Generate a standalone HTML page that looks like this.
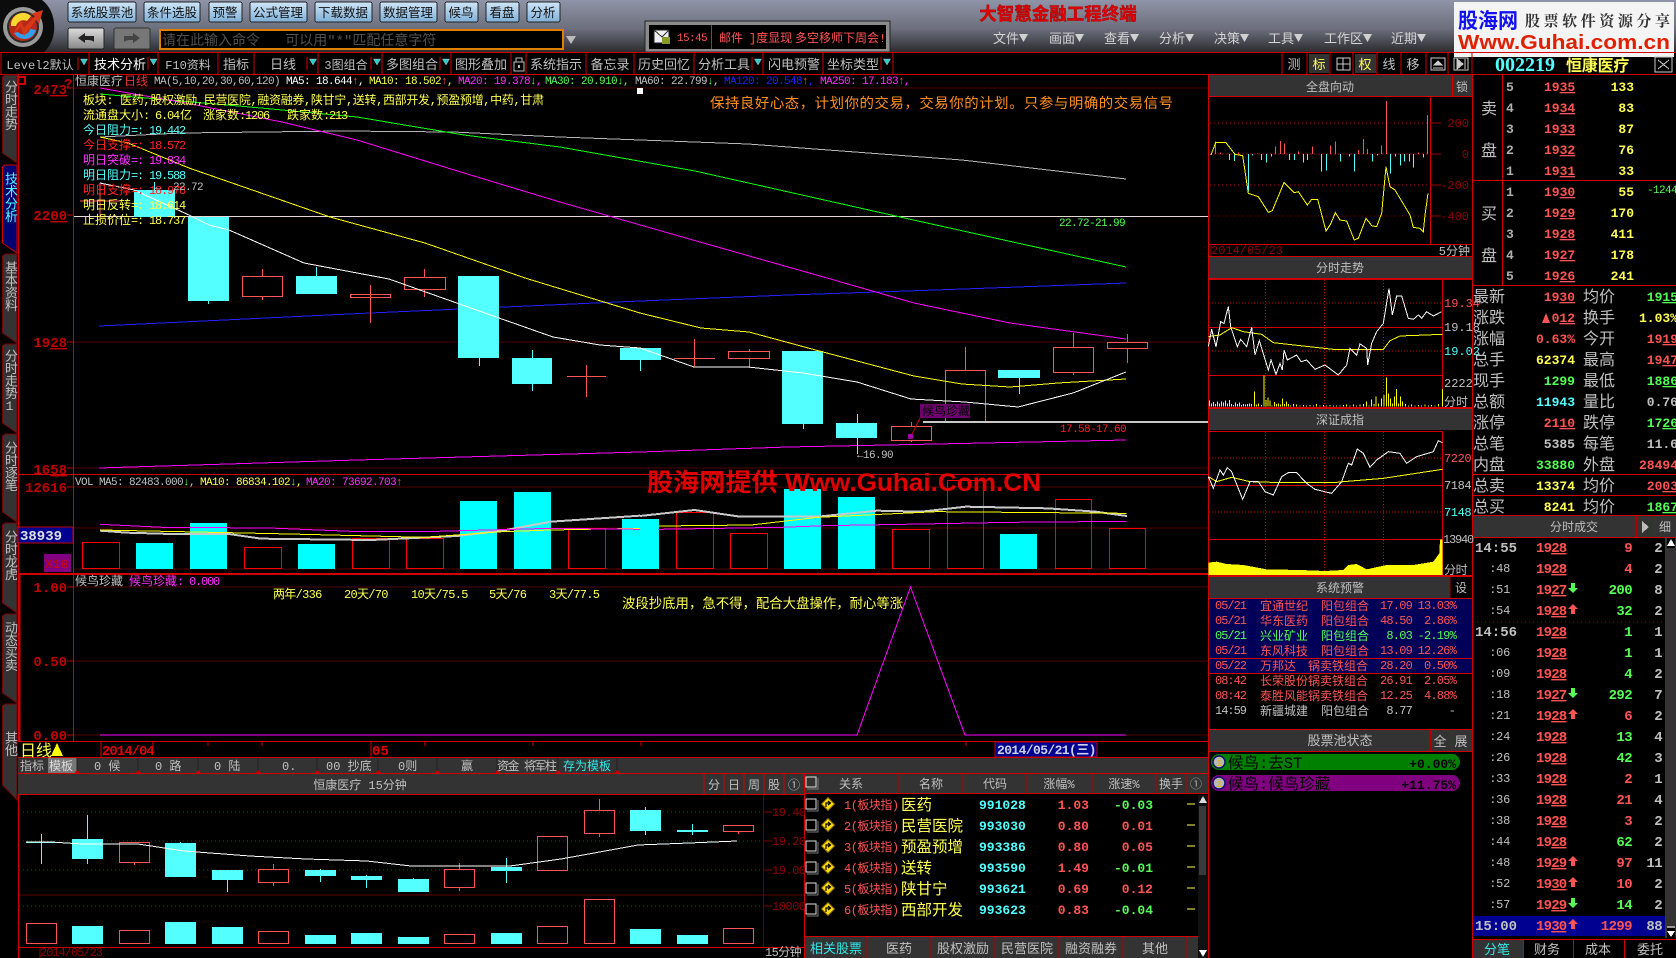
<!DOCTYPE html>
<html><head><meta charset="utf-8"><title>大智慧金融工程终端</title>
<style>
html,body{margin:0;padding:0;background:#000;width:1676px;height:958px;overflow:hidden}
svg{display:block}
text{font-family:"Liberation Mono","Noto Sans CJK SC",monospace;white-space:pre}
polyline{fill:none;vector-effect:non-scaling-stroke}
.s10{font-size:11px;letter-spacing:-.6px}
.s12{font-size:12px}
.s13{font-size:13px}
.s14{font-size:14px}
.s16{font-size:16px}
.b{font-weight:bold}
.n{font-size:13px;font-weight:bold}
.m{text-anchor:middle}
.e{text-anchor:end}
.W{fill:#c0c0c0}.W2{fill:#e8e8e8}.R{fill:#ff5454}.D{fill:#c00000}.Y{fill:#ffff54}.C{fill:#54ffff}.G{fill:#54ff54}.M{fill:#ff30ff}.B{fill:#3030ff}.K{fill:#000}.O{fill:#ff9020}
.u{text-decoration:underline}
.v{writing-mode:vertical-rl;text-orientation:upright;font-size:13px;letter-spacing:-.5px}
.hd{fill:#333}
.btn{fill:url(#bt);stroke:#222}
.nr{letter-spacing:-1.2px}
</style></head><body>
<svg xmlns="http://www.w3.org/2000/svg" width="1676" height="958" viewBox="0 0 1676 958" shape-rendering="crispEdges">
<defs>
<linearGradient id="top" x1="0" y1="0" x2="0" y2="1"><stop offset="0" stop-color="#8f94a8"/><stop offset=".55" stop-color="#6c6f7c"/><stop offset="1" stop-color="#2c2c30"/></linearGradient>
<linearGradient id="bt" x1="0" y1="0" x2="0" y2="1"><stop offset="0" stop-color="#cfe6f8"/><stop offset="1" stop-color="#7fb0d8"/></linearGradient>
<linearGradient id="gb" x1="0" y1="0" x2="0" y2="1"><stop offset="0" stop-color="#ddd"/><stop offset="1" stop-color="#888"/></linearGradient>
<path id="au" d="M0 -5L5 0H2V5H-2V0H-5Z" fill="#ff5454" shape-rendering="auto"/>
<path id="ad" d="M0 5L5 0H2V-5H-2V0H-5Z" fill="#54ff54" shape-rendering="auto"/>
<path id="tri" d="M-3.5 -3H3.5L0 3Z" fill="#30c8c8" stroke="#fff" stroke-width=".3" shape-rendering="auto"/>
<path id="mt" d="M0 0H9L4.500 8Z" fill="#d0d0d0" shape-rendering="auto"/>
<g id="cb"><rect x="0" y="0" width="10" height="10" fill="none" stroke="#e0e0e0"/><path d="M1 12H12V1" fill="none" stroke="#777"/></g>
<g id="dm" shape-rendering="auto"><path d="M0 -6.5L6.5 0L0 6.5L-6.5 0Z" fill="#ffe000" stroke="#886600"/><path d="M-2 3V-1H2M0 -3L2.5 -1L0 1" fill="none" stroke="#000" stroke-width="1.2"/></g>
</defs>
<rect width="1676" height="958" fill="#000"/>

<!-- top bar -->
<rect width="1676" height="52" fill="url(#top)"/>
<path d="M0 0H42C58 12 58 40 44 52H0Z" fill="#0c0c0c" shape-rendering="auto"/>
<g shape-rendering="auto">
<circle cx="23" cy="27" r="20" fill="#999"/><circle cx="23" cy="27" r="16" fill="#2a2a2a"/>
<circle cx="23" cy="27" r="14" fill="#b82818"/>
<path d="M11 26A12 12 0 0 1 31 16L27 21A8 8 0 0 0 16 26Z" fill="#f8d830"/>
<path d="M14 33A12 12 0 0 0 36 30L30 29A7 7 0 0 1 18 32Z" fill="#30a0e8"/>
<path d="M13 34L21 20L24 28L35 16L31 14L43 10L39 24L36 20L24 36L21 27Z" fill="#d83818"/>
</g>
<g text-anchor="middle" fill="#111" style="font-size:12.500px">
<rect class="btn" x="68" y="2" width="68" height="20" rx="2"/><text x="102" y="17">系统股票池</text>
<rect class="btn" x="144" y="2" width="56" height="20" rx="2"/><text x="172" y="17">条件选股</text>
<rect class="btn" x="209" y="2" width="33" height="20" rx="2"/><text x="225" y="17">预警</text>
<rect class="btn" x="250" y="2" width="57" height="20" rx="2"/><text x="278" y="17">公式管理</text>
<rect class="btn" x="315" y="2" width="57" height="20" rx="2"/><text x="343" y="17">下载数据</text>
<rect class="btn" x="380" y="2" width="57" height="20" rx="2"/><text x="408" y="17">数据管理</text>
<rect class="btn" x="445" y="2" width="33" height="20" rx="2"/><text x="461" y="17">候鸟</text>
<rect class="btn" x="486" y="2" width="33" height="20" rx="2"/><text x="502" y="17">看盘</text>
<rect class="btn" x="527" y="2" width="33" height="20" rx="2"/><text x="543" y="17">分析</text>
</g>
<rect x="68" y="28" width="36" height="21" rx="2" fill="url(#gb)" stroke="#222"/>
<path d="M78 38L85 33V36H94V42C92 40 89 40 85 40V43Z" fill="#222" shape-rendering="auto"/>
<rect x="114" y="28" width="36" height="21" rx="2" fill="#777" stroke="#333"/>
<path d="M140 38L133 33V36H124V42C126 40 129 40 133 40V43Z" fill="#444" shape-rendering="auto"/>
<rect x="160" y="30" width="403" height="19" fill="#000" stroke="#e08000" stroke-width="2"/>
<text x="162" y="45" class="s14" fill="#505050">请在此输入命令   可以用"*"匹配任意字符</text>
<path d="M566 36H576L571 44Z" fill="#bbb"/>
<rect x="645" y="21" width="245" height="31" fill="#8a8a8a" stroke="#222"/>
<rect x="649" y="25" width="237" height="24" fill="#000"/>
<rect x="654" y="30" width="15" height="13" fill="#eee" stroke="#222"/><path d="M654 30L662 37L669 30" fill="none" stroke="#333"/><rect x="662" y="37" width="8" height="7" fill="#8a9a30"/>
<text x="677" y="41" class="s10" fill="#ff5454">15:45</text>
<rect x="711" y="25" width="1" height="24" fill="#555"/>
<g class="s12" fill="#ff5454"><text x="719" y="42">邮件</text><text x="749" y="42">]度显现</text><text x="795" y="42">多空移师下周会!</text></g>
<text x="1058" y="20" class="s16 b m" fill="#e00000" stroke="#a00000" stroke-width=".4" style="font-size:17.5px">大智慧金融工程终端</text>
<g class="s13" fill="#d4d4d4">
<text x="993" y="43">文件</text><text x="1049" y="43">画面</text><text x="1104" y="43">查看</text><text x="1159" y="43">分析</text><text x="1214" y="43">决策</text><text x="1268" y="43">工具</text><text x="1324" y="43">工作区</text><text x="1391" y="43">近期</text>
</g>
<use href="#mt" x="1019" y="34"/><use href="#mt" x="1075" y="34"/><use href="#mt" x="1130" y="34"/><use href="#mt" x="1185" y="34"/><use href="#mt" x="1240" y="34"/><use href="#mt" x="1294" y="34"/><use href="#mt" x="1363" y="34"/><use href="#mt" x="1417" y="34"/>

<!-- guhai logo -->
<rect x="1454" y="2" width="220" height="55" fill="#f4f4f4"/>
<text x="1458" y="28" class="b" fill="#1010f0" textLength="60" lengthAdjust="spacingAndGlyphs" style="font-size:21px;font-family:'Liberation Sans','Noto Sans CJK SC',sans-serif">股海网</text>
<text x="1525" y="26" class="b" fill="#333" textLength="145" style="font-size:15px;font-family:'Noto Serif CJK SC',serif">股票软件资源分享</text>
<text x="1458" y="49" class="b" fill="#e02000" textLength="212" lengthAdjust="spacingAndGlyphs" style="font-size:20px;font-family:'Liberation Sans',sans-serif">Www.Guhai.com.cn</text>

<!-- toolbar -->
<rect x="0" y="52" width="1676" height="1" fill="#d00000"/><rect x="0" y="74" width="1676" height="1" fill="#d00000"/>
<path d="M1 53V74M89 53V74M158 53V74M218 53V74M254 53V74M318 53V74M382 53V74M451 53V74M511 53V74M526 53V74M586 53V74M634 53V74M694 53V74M763 53V74M823 53V74M893 53V74M1282 53V74M1307 53V74M1330 53V74M1353 53V74M1377 53V74M1401 53V74M1426 53V74M1448 53V74M1472 53V74M78 57V70M148 57V70M307 57V70M371 57V70M440 57V70M752 57V70M881 57V70" stroke="#d00000" fill="none"/>
<use href="#tri" x="84" y="62"/><use href="#tri" x="153.5" y="62"/><use href="#tri" x="313" y="62"/><use href="#tri" x="377" y="62"/><use href="#tri" x="446" y="62"/><use href="#tri" x="758" y="62"/><use href="#tri" x="887" y="62"/>
<g class="s13 m W">
<text x="40" y="69" style="font-size:12px">Level2默认</text><text x="120" y="69" fill="#fff" style="fill:#fff">技术分析</text><text x="188" y="69" style="font-size:12px">F10资料</text><text x="236" y="69">指标</text><text x="283" y="69">日线</text><text x="346" y="69" style="font-size:12px">3图组合</text><text x="412" y="69">多图组合</text><text x="481" y="69">图形叠加</text><text x="556" y="69">系统指示</text><text x="610" y="69">备忘录</text><text x="664" y="69">历史回忆</text><text x="724" y="69">分析工具</text><text x="794" y="69">闪电预警</text><text x="853" y="69">坐标类型</text>
<text x="1294" y="69">测</text><text x="1389" y="69">线</text><text x="1413" y="69">移</text>
</g>
<rect x="514" y="62" width="10" height="9" fill="none" stroke="#bbb"/><path d="M516 62V58H522V62" fill="none" stroke="#bbb"/><rect x="518" y="65" width="2" height="3" fill="#bbb"/>
<rect x="1309" y="54" width="20" height="19" fill="#333"/><text x="1319" y="69" class="s13 m Y">标</text>
<rect x="1355" y="54" width="21" height="19" fill="#333"/><text x="1365" y="69" class="s13 m Y">权</text>
<rect x="1337" y="58" width="13" height="12" fill="none" stroke="#ccc"/><path d="M1343 58V70M1337 64H1350" stroke="#ccc"/>
<rect x="1431" y="58" width="14" height="12" fill="none" stroke="#ccc"/><path d="M1434 65L1438 61L1442 65Z M1433 68H1443" fill="#ccc" stroke="#ccc"/>
<rect x="1454" y="58" width="14" height="12" fill="none" stroke="#ccc"/><path d="M1457 59L1463 64L1457 69Z M1465 59V69" fill="#ccc" stroke="#ccc"/>
<text x="1495" y="71" class="b C" style="font-size:20px;font-family:'Liberation Serif',serif">002219</text>
<text x="1566" y="71" class="b Y" style="font-size:16px;letter-spacing:-.2px">恒康医疗</text>
<rect x="1655" y="57" width="17" height="15" fill="none" stroke="#ccc"/><path d="M1658 60L1669 69M1669 60L1658 69" stroke="#ccc"/>

<!-- left tabs -->
<g fill="#333" stroke="#700" shape-rendering="auto">
<path d="M2.5 77L5 75H17V163L2.5 153Z"/><path d="M2.5 167L5 165H17V253L2.5 243Z" fill="#000070" stroke="#d00000"/><path d="M2.5 256L5 254H17V343L2.5 333Z"/><path d="M2.5 346L5 344H17V433L2.5 423Z"/><path d="M2.5 436L5 434H17V522L2.5 512Z"/><path d="M2.5 525L5 523H17V613L2.5 603Z"/><path d="M2.5 616L5 614H17V703L2.5 693Z"/><path d="M2.5 706L5 704H17V800L2.5 785Z"/>
</g>
<g class="v W">
<text x="9.5" y="80">分时走势</text><text x="9.5" y="172" class="C" style="fill:#54ffff">技术分析</text><text x="9.5" y="261">基本资料</text><text x="9.5" y="349">分时走势1</text><text x="9.5" y="441">分时逐笔</text><text x="9.5" y="530">分时龙虎</text><text x="9.5" y="621">动态买卖</text><text x="9.5" y="731">其他</text>
</g>

<!-- main chart frame -->
<path d="M18.5 75V742M73.5 75V742M1208.5 75V958" stroke="#d00000" fill="none"/>
<rect x="18" y="474" width="1190" height="1" fill="#d00000"/><rect x="18" y="573" width="1190" height="2" fill="#d00000"/><rect x="18" y="741" width="1190" height="1" fill="#d00000"/><rect x="18" y="757" width="1190" height="1" fill="#d00000"/>
<path d="M19.5 574V742" stroke="#d00000" stroke-width="2"/>
<path d="M74 88H1208M74 342H1208M74 468H1208M74 487H1208M74 528H1208M74 569H1208M74 587H1208M74 661H1208M74 735H1208" stroke="#500000"/>
<path d="M67 88H73M67 215H73M67 342H73M67 468H73M67 487H73M67 587H73M67 661H73M67 735H73" stroke="#c00000"/>
<rect x="74" y="216" width="1134" height="1" fill="#e8d8d8"/>
<rect x="923" y="421" width="285" height="2" fill="#c8c8c8"/>
<g class="n D e" style="font-size:14px">
<text x="67" y="94"><tspan>24</tspan><tspan class="u">73</tspan></text>
<text x="67" y="220"><tspan>22</tspan><tspan class="u">00</tspan></text>
<text x="67" y="347"><tspan>19</tspan><tspan class="u">28</tspan></text>
<text x="67" y="474"><tspan>16</tspan><tspan class="u">58</tspan></text>
<text x="67" y="492">12616</text>
<text x="67" y="592">1.00</text><text x="67" y="666">0.50</text><text x="67" y="740">0.00</text>
</g>
<rect x="18" y="527" width="55" height="16" fill="#000090" stroke="#c00000"/><text x="20" y="540" class="n W2" style="fill:#e0e0e0;font-size:14px">38939</text>
<rect x="44" y="554" width="27" height="18" fill="#800080"/><text x="45" y="568" class="s13 D" style="fill:#d00000">X10</text>

<!-- ma header -->
<g class="s10">
<text x="75" y="85" class="s13 W" style="letter-spacing:0;font-size:12px">恒康医疗</text><text x="124" y="85" class="s13 R" style="letter-spacing:0;fill:#f03030;font-size:12px">日线</text>
<text x="154" y="84" class="W">MA(5,10,20,30,60,120)</text>
<text x="286" y="84" fill="#fff">MA5: 18.644<tspan fill="#ff5454">↑</tspan>,</text>
<text x="369" y="84" class="Y">MA10: 18.502<tspan fill="#ff5454">↑</tspan>,</text>
<text x="458" y="84" class="M">MA20: 19.378<tspan fill="#54ff54">↓</tspan>,</text>
<text x="545" y="84" class="G">MA30: 20.910<tspan fill="#54ff54">↓</tspan>,</text>
<text x="635" y="84" class="W">MA60: 22.799<tspan fill="#54ff54">↓</tspan>,</text>
<text x="724" y="84" fill="#2020ff">MA120: 20.548<tspan fill="#ff5454">↑</tspan>,</text>
<text x="820" y="84" class="M">MA250: 17.183<tspan fill="#ff5454">↑</tspan>,</text>
</g>
<rect x="17" y="76" width="9" height="9" fill="#d00000"/><rect x="19" y="78" width="5" height="5" fill="#000"/><text x="64" y="88" class="s14 b D">?</text>
<rect x="637" y="88" width="6" height="6" fill="#fff"/>

<!-- price lines -->
<g stroke-width="1">
<polyline stroke="#b8b8b8" points="100,137 182,133 343,131 453,132 560,137 748,144 962,160 1126,179"/>
<polyline stroke="#00ff00" points="100,94 250,107 357,117 464,135 560,147 695,171 909,219 1126,267"/>
<polyline stroke="#2020ff" points="99,326 370,313 640,301 788,295 936,290 1126,283"/>
<polyline stroke="#ff00ff" points="99,468 357,460 640,452 788,447 936,444 1126,440"/>
<polyline stroke="#ff00ff" points="100,88 186,103 282,122 357,140 464,173 560,202 700,242 834,280 914,303 1010,323 1126,339"/>
</g>
<!-- candles -->
<path fill="none" stroke="#ff5454" d="M80 201H120M100 183V220M242.500 276.500H282.500V296.500H242.500ZM262.500 269V276M262.500 297V300M350.500 294.500H390.500V297.500H350.500ZM370.500 285V323M404.500 277.500H445.500V289.500H404.500ZM424.500 269V277M424.500 290V297M567 376.500H606M586.500 365V397M674 358.500H715M694.500 339V366M728.500 351.500H769.500V358.500H728.500ZM749.500 349V351M749.500 359V368M891.500 426.500H931.500V440.500H891.500ZM911.500 422V426M911.500 441V442M945.500 421V370.500H985.500V421M965.500 347V370M1053.500 347.500H1093.500V372.500H1053.500ZM1073.500 333V347M1073.500 373V375M1107.500 342.500H1147.500V348.500H1107.500ZM1127.500 334V342M1127.500 349V363"/>
<g fill="#54ffff">
<rect x="134" y="190" width="41" height="27"/><rect x="154" y="182" width="1" height="8"/>
<rect x="188" y="217" width="41" height="84"/><rect x="208" y="301" width="1" height="3"/>
<rect x="296" y="276" width="41" height="18"/><rect x="316" y="267" width="1" height="9"/>
<rect x="458" y="276" width="41" height="82"/><rect x="479" y="358" width="1" height="8"/>
<rect x="512" y="358" width="40" height="26"/><rect x="532" y="350" width="1" height="41"/>
<rect x="620" y="348" width="41" height="12"/><rect x="640" y="360" width="1" height="11"/>
<rect x="782" y="351" width="41" height="73"/><rect x="803" y="424" width="1" height="5"/>
<rect x="836" y="423" width="41" height="15"/><rect x="857" y="414" width="1" height="40"/>
<rect x="998" y="370" width="42" height="8"/><rect x="1019" y="378" width="1" height="16"/>
</g>
<g>
<polyline stroke="#ffff00" points="100,137 128,143 189,168 330,217 425,243 525,278 640,313 701,328 749,332 823,352 914,376 962,384 1010,387 1058,383 1126,379"/>
<polyline stroke="#ffffff" points="100,183 134,190 189,215 209,225 229,230 304,263 389,279 499,318 553,337 600,345 640,348 694,367 748,367 803,373 857,382 911,399 965,402 1018,407 1073,393 1126,372"/>
</g>
<!-- labels -->
<g class="s12">
<text x="83" y="104" class="Y" textLength="461">板块: 医药,股权激励,民营医院,融资融券,陕甘宁,送转,西部开发,预盈预增,中药,甘肃</text>
<g class="Y"><text x="83" y="119">流通盘大小:</text><text x="155" y="119" class="nr">6.04</text><text x="180" y="119">亿</text><text x="203" y="119">涨家数</text><text x="239" y="119" class="nr">:1206</text><text x="287" y="119">跌家数</text><text x="323" y="119" class="nr">:213</text></g>
<text x="83" y="134" class="C">今日阻力<tspan class="nr">=: 19.442</tspan></text>
<text x="83" y="149" fill="#ff2020">今日支撑<tspan class="nr">=: 18.572</tspan></text>
<text x="83" y="164" class="M">明日突破<tspan class="nr">=: 19.834</tspan></text>
<text x="83" y="179" class="C">明日阻力<tspan class="nr">=: 19.588</tspan></text>
<text x="83" y="194" fill="#ff2020">明日支撑<tspan class="nr">=: 18.978</tspan></text>
<text x="83" y="209" class="Y">明日反转<tspan class="nr">=: 18.614</tspan></text>
<text x="83" y="224" class="Y">止损价位<tspan class="nr">=: 18.737</tspan></text>
</g>
<text x="155" y="190" class="s10 W">←  22.72</text>
<text x="710" y="108" class="s14 O" textLength="463" style="font-size:14.4px">保持良好心态，计划你的交易，交易你的计划。只参与明确的交易信号</text>
<text x="1059" y="226" class="s10 G">22.72-21.99</text>
<text x="1060" y="432" class="s10" fill="#ff2020">17.58-17.60</text>
<text x="857" y="458" class="s10 W">←16.90</text>
<rect x="920" y="404" width="50" height="14" fill="#700070"/><text x="922" y="415" class="s12" fill="#000">候鸟珍藏</text>
<path d="M920 418L911 436" stroke="#d00000" fill="none"/><rect x="908" y="434" width="5" height="5" fill="#a000a0"/>

<!-- volume -->
<g class="s10">
<text x="75" y="485" class="W">VOL</text><text x="99" y="485" class="W">MA5: 82483.000<tspan fill="#54ff54">↓</tspan>,</text>
<text x="200" y="485" class="Y">MA10: 86834.102<tspan fill="#54ff54">↓</tspan>,</text>
<text x="306" y="485" class="M">MA20: 73692.703<tspan fill="#ff5454">↑</tspan></text>
</g>
<path fill="none" stroke="#ff0000" d="M82.500 542.500H119.500V568.500H82.500ZM244.500 547.500H281.500V568.500H244.500ZM352.500 538.500H389.500V568.500H352.500ZM406.500 538.500H443.500V568.500H406.500ZM568.500 528.500H605.500V568.500H568.500ZM676.500 512.500H713.500V568.500H676.500ZM730.500 533.500H767.500V568.500H730.500ZM892.500 529.500H929.500V568.500H892.500ZM947.500 480.500H983.500V568.500H947.500ZM1055.500 499.500H1091.500V568.500H1055.500ZM1109.500 528.500H1145.500V568.500H1109.500Z"/>
<g fill="#00ffff">
<rect x="136" y="543" width="37" height="26"/><rect x="190" y="523" width="37" height="46"/><rect x="298" y="544" width="37" height="25"/><rect x="460" y="501" width="37" height="68"/><rect x="514" y="492" width="37" height="77"/><rect x="622" y="519" width="37" height="50"/><rect x="784" y="489" width="37" height="80"/><rect x="838" y="497" width="37" height="72"/><rect x="1000" y="534" width="37" height="35"/>
</g>
<g transform="translate(0,460) scale(.40816,.33333)"><polyline stroke="#c8c8c8" stroke-width="2" points="245,212 310,218 420,222 560,222 640,236 910,240 1120,228 1230,212 1350,185 1568,167"/><polyline stroke="#ffff00" points="245,210 560,218 710,222 1040,232 1230,215 1350,210 1568,205"/><polyline stroke="#ff00ff" points="245,193 400,202 660,204 860,214 1070,214 1350,205 1568,208"/></g>
<g transform="translate(640,280) scale(.37037,.33333)"><polyline stroke="#c8c8c8" stroke-width="2" points="0,708 147,690 270,710 480,710 640,692 760,695 880,680 1100,685 1230,695 1315,708"/><polyline stroke="#ffff00" points="50,738 300,735 480,712 800,695 1000,697 1313,700"/><polyline stroke="#ff00ff" points="50,748 380,742 500,737 760,732 1000,727 1313,724"/></g>
<text x="647" y="491" class="b" fill="#e00000" textLength="394" lengthAdjust="spacingAndGlyphs" style="font-size:25px;font-family:'Liberation Sans','Noto Sans CJK SC',sans-serif">股海网提供 Www.Guhai.Com.CN</text>

<!-- indicator -->
<text x="75" y="585" class="s12 W">候鸟珍藏</text><text x="129" y="585" class="s12 M">候鸟珍藏<tspan class="nr">: 0.000</tspan></text>
<g class="s12 Y" style="font-size:12px;letter-spacing:-.7px"><text x="273" y="598">两年/336</text><text x="344" y="598">20天/70</text><text x="411" y="598">10天/75.5</text><text x="489" y="598">5天/76</text><text x="549" y="598">3天/77.5</text></g>
<text x="622" y="608" class="Y" style="font-size:13.400px">波段抄底用，急不得，配合大盘操作，耐心等涨</text>
<polyline stroke="#ff00ff" points="100,735 857,735 910.500,587 965,735 1126,735"/>

<!-- date row -->
<text x="20" y="756" class="s16 Y">日线</text><path d="M51 756L57 743L63 756Z" fill="#ffff00"/>
<path d="M101 742V757M153 742V746M208 742V746M262 742V746M371 742V757M425 742V746M533 742V746M641 742V746M966 742V746" stroke="#d00000" fill="none"/>
<text x="102" y="755" class="n D" style="font-size:14px;fill:#e00000;letter-spacing:-1px">2014/04</text><text x="372" y="755" class="n" style="font-size:14px;fill:#e00000">05</text>
<rect x="995" y="742" width="102" height="15" fill="#000090" stroke="#c00000"/><text x="997" y="754" class="n" fill="#d0d0e8" style="letter-spacing:-.6px">2014/05/21(三)</text>

<!-- template row -->
<rect x="18" y="758" width="1190" height="15" fill="#333"/><rect x="18" y="773" width="1190" height="1" fill="#d00000"/>
<rect x="48" y="758" width="29" height="15" fill="#777"/>
<path d="M77 758V773M138 758V773M198 758V773M258 758V773M317 758V773M378 758V773M437 758V773M497 758V773M558 758V773M617 758V773" stroke="#222" fill="none"/>
<path d="M77 770L74 773H80ZM138 770L135 773H141ZM198 770L195 773H201ZM258 770L255 773H261ZM317 770L314 773H320ZM378 770L375 773H381ZM437 770L434 773H440ZM497 770L494 773H500ZM558 770L555 773H561ZM617 770L614 773H620Z" fill="#c00000"/>
<g class="s12 W"><text x="20" y="770">指标</text><text x="49" y="770" fill="#ddd">模板</text><text x="94" y="770">0 候</text><text x="155" y="770">0 路</text><text x="214" y="770">0 陆</text><text x="282" y="770">0.</text><text x="326" y="770">00 抄底</text><text x="398" y="770">0则</text><text x="461" y="770">赢</text><text x="497" y="770" textLength="60">资金 将军柱</text><text x="563" y="770" class="C" style="fill:#30e8e8">存为模板</text></g>

<!-- 15 min chart -->
<rect x="18" y="774" width="786" height="20" class="hd"/><rect x="18" y="794" width="786" height="1" fill="#d00000"/><rect x="18" y="947" width="786" height="1" fill="#d00000"/>
<path d="M704 774V794M724 774V794M744 774V794M764 774V794M784 774V794M804.500 773V958M18.500 795V958" stroke="#d00000" fill="none"/>
<text x="360" y="789" class="s12 m W">恒康医疗 15分钟</text>
<g class="s12 m W"><text x="714" y="789">分</text><text x="734" y="789">日</text><text x="754" y="789">周</text><text x="774" y="789">股</text><text x="794" y="789">①</text></g>
<path d="M763.500 795V947M19 895H804" stroke="#600000" fill="none"/>
<path d="M19 812H763M19 841H763M19 870H763M19 906H763" stroke="#a00000" stroke-dasharray="1 3" fill="none"/>
<path d="M763 812H772M763 841H772M763 870H772M763 906H772" stroke="#800000"/>
<g class="s12" fill="#900000" style="font-size:12px;letter-spacing:-.5px"><text x="772" y="816">19.40</text><text x="772" y="845">19.20</text><text x="772" y="874">19.00</text><text x="772" y="910">10000</text></g>
<path fill="none" stroke="#ff5454" d="M119.500 842.500H149.500V862.500H119.500ZM134.500 862V865M258.500 869.500H288.500V882.500H258.500ZM273.500 864V869M273.500 883V886M444.500 869.500H474.500V887.500H444.500ZM459.500 863V869M459.500 888V891M537.500 836.500H567.500V870.500H537.500ZM584.500 810.500H614.500V833.500H584.500ZM599.500 799V810M599.500 834V837M723.500 825.500H753.500V831.500H723.500ZM738.500 832V834M26.500 923.500H56.500V943.500H26.500ZM119.500 930.500H149.500V943.500H119.500ZM258.500 931.500H288.500V943.500H258.500ZM444.500 934.500H474.500V943.500H444.500ZM537.500 926.500H567.500V943.500H537.500ZM584.500 899.500H614.500V943.500H584.500ZM723.500 928.500H753.500V943.500H723.500Z"/>
<g fill="#54ffff">
<rect x="26" y="842" width="31" height="1"/><rect x="41" y="834" width="1" height="30"/>
<rect x="72" y="839" width="31" height="20"/><rect x="87" y="815" width="1" height="49"/>
<rect x="165" y="843" width="31" height="34"/><rect x="180" y="842" width="1" height="2"/>
<rect x="212" y="870" width="31" height="10"/><rect x="227" y="880" width="1" height="12"/>
<rect x="305" y="870" width="31" height="6"/><rect x="320" y="869" width="1" height="13"/>
<rect x="351" y="876" width="31" height="4"/><rect x="366" y="875" width="1" height="13"/>
<rect x="398" y="879" width="31" height="13"/><rect x="413" y="878" width="1" height="2"/>
<rect x="491" y="867" width="31" height="4"/><rect x="506" y="858" width="1" height="25"/>
<rect x="630" y="810" width="31" height="21"/><rect x="645" y="807" width="1" height="28"/>
<rect x="677" y="830" width="31" height="2"/><rect x="692" y="824" width="1" height="11"/>
<rect x="72" y="926" width="31" height="18"/><rect x="165" y="922" width="31" height="22"/><rect x="212" y="927" width="31" height="17"/><rect x="305" y="935" width="31" height="9"/><rect x="351" y="933" width="31" height="11"/><rect x="398" y="937" width="31" height="7"/><rect x="491" y="933" width="31" height="11"/><rect x="630" y="929" width="31" height="15"/><rect x="677" y="935" width="31" height="9"/>
</g>
<polyline stroke="#fff" points="26,842 51,842 82,844 138,844 184,851 250,856 306,859 367,861 411,866 510,866 561,859 638,845 689,843 737,841"/>
<text x="40" y="956" class="s12" fill="#900000" style="letter-spacing:-1px">2014/05/23</text><path d="M40 947V958" stroke="#900000"/>
<text x="765" y="956" class="s12 W" style="letter-spacing:-.6px">15分钟</text>

<!-- related table -->
<rect x="805" y="774" width="403" height="19" class="hd"/><rect x="805" y="793" width="403" height="1" fill="#d00000"/>
<path d="M899 774V793M963 774V793M1027 774V793M1092 774V793M1156 774V793M1187 774V793" stroke="#b00000" fill="none"/>
<use href="#cb" x="806" y="777"/>
<g class="s12 m W"><text x="851" y="788">关系</text><text x="931" y="788">名称</text><text x="995" y="788">代码</text><text x="1059" y="788">涨幅%</text><text x="1124" y="788">涨速%</text><text x="1171" y="788">换手</text><text x="1196" y="788" style="fill:#aaa">①</text></g>
<g>
<use href="#cb" x="806" y="799"/><use href="#dm" x="828" y="804"/><use href="#cb" x="806" y="820"/><use href="#dm" x="828" y="825"/><use href="#cb" x="806" y="841"/><use href="#dm" x="828" y="846"/><use href="#cb" x="806" y="862"/><use href="#dm" x="828" y="867"/><use href="#cb" x="806" y="883"/><use href="#dm" x="828" y="888"/><use href="#cb" x="806" y="904"/><use href="#dm" x="828" y="909"/>
</g>
<g class="s12 R" style="letter-spacing:-.5px"><text x="844" y="809">1(板块指)</text><text x="844" y="830">2(板块指)</text><text x="844" y="851">3(板块指)</text><text x="844" y="872">4(板块指)</text><text x="844" y="893">5(板块指)</text><text x="844" y="914">6(板块指)</text></g>
<g class="s16 Y" style="font-size:15.500px"><text x="901" y="810">医药</text><text x="901" y="831">民营医院</text><text x="901" y="852">预盈预增</text><text x="901" y="873">送转</text><text x="901" y="894">陕甘宁</text><text x="901" y="915">西部开发</text></g>
<g class="n C"><text x="979" y="809">991028</text><text x="979" y="830">993030</text><text x="979" y="851">993386</text><text x="979" y="872">993590</text><text x="979" y="893">993621</text><text x="979" y="914">993623</text></g>
<g class="n R e"><text x="1089" y="809">1.03</text><text x="1089" y="830">0.80</text><text x="1089" y="851">0.80</text><text x="1089" y="872">1.49</text><text x="1089" y="893">0.69</text><text x="1089" y="914">0.83</text></g>
<g class="n e"><text x="1153" y="809" class="G">-0.03</text><text x="1153" y="830" class="R">0.01</text><text x="1153" y="851" class="R">0.05</text><text x="1153" y="872" class="G">-0.01</text><text x="1153" y="893" class="R">0.12</text><text x="1153" y="914" class="G">-0.04</text></g>
<path d="M1187 804H1195M1187 825H1195M1187 846H1195M1187 867H1195M1187 888H1195M1187 909H1195" stroke="#ffff54"/>
<rect x="1198" y="795" width="10" height="163" fill="#111"/><rect x="1199" y="806" width="7" height="69" fill="#3a3a3a"/>
<path d="M1203 796L1199 803H1207Z" fill="#ddd"/><path d="M1199 950H1207L1203 957Z" fill="#fff"/>
<rect x="805" y="937" width="393" height="21" class="hd"/><rect x="805" y="936" width="393" height="1" fill="#d00000"/>
<path d="M867 937V958M931 937V958M995 937V958M1059 937V958M1123 937V958M1187 937V958" stroke="#b00000" fill="none"/>
<g class="s13 m W"><text x="836" y="953" style="fill:#30e8e8">相关股票</text><text x="899" y="953">医药</text><text x="963" y="953">股权激励</text><text x="1027" y="953">民营医院</text><text x="1091" y="953">融资融券</text><text x="1155" y="953">其他</text></g>

<!-- right middle panels -->
<rect x="1209" y="75" width="243" height="21" class="hd"/><rect x="1453" y="75" width="19" height="21" class="hd"/>
<rect x="1209" y="96" width="263" height="1" fill="#d00000"/><path d="M1452.500 75V96M1472.500 75V958" stroke="#d00000" fill="none"/>
<text x="1330" y="91" class="s12 m W">全盘向动</text><text x="1462" y="91" class="s12 m W">锁</text>
<path d="M1430.500 97V244M1209 244.500H1472M1209 256.500H1472" stroke="#d00000" fill="none"/>
<path d="M1210 123H1430M1210 185H1430M1210 216H1430" stroke="#a00000" stroke-dasharray="1 3" fill="none"/>
<path d="M1210 154H1430" stroke="#a00000" stroke-dasharray="2 2" fill="none"/>
<path d="M1430 123H1441M1430 154H1441M1430 185H1441M1430 216H1441" stroke="#a00000"/>
<g class="s12" fill="#900000" text-anchor="end"><text x="1469" y="127">200</text><text x="1469" y="158">0</text><text x="1469" y="189">-200</text><text x="1469" y="220">-400</text></g>
<g transform="translate(1200,0) scale(.33333)">
<path fill="none" stroke="#ff5454" stroke-width="3" d="M47 462V425M62 462V458M115 462V458M172 462V460M226 462V440M241 462V423M253 462V430M295 462V455M337 462V440M392 462V437M406 462V425M475 462V450M490 462V417M502 462V447M545 462V437M559 462V303M655 462V458M683 462V345"/>
<path fill="none" stroke="#54ffff" stroke-width="3" d="M88 462V480M103 462V483M145 462V575M157 462V467M185 462V480M199 462V488M214 462V470M268 462V480M283 462V480M310 462V488M322 462V480M364 462V515M379 462V512M421 462V485M448 462V470M463 462V515M517 462V485M532 462V467M571 462V520M586 462V470M601 462V497M613 462V485M628 462V485M640 462V503M670 462V473"/>
<polyline stroke="#ffff00" points="33,465 47,428 78,428 105,463 128,467 145,580 175,590 205,637 217,632 252,548 283,578 295,575 322,615 335,598 353,598 378,693 392,672 406,638 420,660 440,663 463,720 475,715 498,655 515,677 530,680 545,640 558,500 570,560 585,570 630,645 640,682 660,685 670,695 675,645 684,580"/>
</g>
<text x="1211" y="254" class="s12" fill="#900000">2014/05/23</text><path d="M1211 244V256" stroke="#900000"/><text x="1470" y="255" class="s12 e W">5分钟</text>

<rect x="1209" y="257" width="263" height="21" class="hd"/><text x="1340" y="272" class="s12 m W">分时走势</text>
<rect x="1209" y="278" width="263" height="2" fill="#d00000"/>
<path d="M1442.500 280V407M1209 327.500H1442M1209 375.500H1442" stroke="#d00000" fill="none"/>
<path d="M1209 303H1442M1209 351H1442M1265.500 280V407M1324.500 280V407M1383.500 280V407" stroke="#d00000" stroke-dasharray="1 2" fill="none"/>
<g class="s12"><text x="1444" y="307" class="R">19.34</text><text x="1444" y="331" class="W">19.18</text><text x="1444" y="355" class="C">19.02</text><text x="1444" y="387" class="W">2222</text><text x="1444" y="406" class="W">分时</text></g>
<g transform="translate(1200,280) scale(.33333)">
<path fill="none" stroke="#ffff00" stroke-width="3" d="M28 380V362M34 380V370M40 380V366M46 380V372M52 380V364M58 380V370M64 380V365M70 380V368M76 380V362M82 380V370M88 380V360M94 380V372M100 380V375M106 380V368M112 380V372M118 380V368M124 380V375M130 380V372M136 380V374M142 380V372M148 380V370M154 380V372M163 380V335M170 380V374M176 380V370M184 380V375M192 380V287M198 380V360M204 380V352M210 380V362M216 380V376M224 380V366M230 380V372M236 380V370M242 380V374M248 380V355M254 380V372M260 380V365M266 380V372M272 380V376M280 380V372M290 380V374M300 380V376M310 380V375M320 380V377M330 380V375M340 380V377M350 380V372M360 380V376M370 380V375M380 380V377M390 380V375M400 380V377M410 380V376M420 380V377M430 380V375M440 380V374M450 380V376M460 380V373M470 380V376M480 380V374M490 380V372M500 380V365M507 380V376M515 380V358M522 380V372M528 380V350M535 380V370M545 380V355M552 380V345M560 380V292M566 380V340M572 380V355M578 380V370M584 380V350M590 380V327M596 380V370M602 380V350M608 380V365M616 380V372M625 380V376M635 380V374M645 380V377M655 380V375M665 380V376M675 380V374M685 380V377M695 380V375M705 380V376M715 380V372M727 380V327"/>
<g><polyline stroke="#ffff00" points="25,170 60,165 95,143 130,155 185,163 220,188 300,197 400,208 550,208 570,182 600,168 727,163"/><polyline stroke="#ffffff" points="25,200 35,148 48,200 62,125 72,130 85,80 92,140 112,200 122,178 140,200 155,142 165,225 178,182 205,270 213,240 228,283 240,250 247,270 252,210 262,240 290,225 303,245 320,240 345,268 375,255 395,270 415,285 440,255 450,205 470,225 480,192 500,205 503,255 515,190 530,155 550,130 567,25 577,105 590,48 605,48 625,115 640,118 655,105 665,115 680,95 700,108 725,95"/></g>
</g>
<rect x="1209" y="407" width="263" height="2" fill="#d00000"/><rect x="1209" y="409" width="263" height="21" class="hd"/><text x="1340" y="424" class="s12 m W">深证成指</text>
<rect x="1209" y="431" width="233" height="1" fill="#d00000"/>
<path d="M1442.500 431V575M1209 485.500H1442M1209 539.500H1442" stroke="#d00000" fill="none"/>
<path d="M1209 458H1442M1209 512H1442M1265.500 432V575M1324.500 432V575M1383.500 432V575" stroke="#d00000" stroke-dasharray="1 2" fill="none"/>
<g class="s12" style="letter-spacing:-.4px"><text x="1444" y="462" class="R">7220</text><text x="1444" y="489" class="W">7184</text><text x="1444" y="516" class="C">7148</text><text x="1443" y="543" class="W" style="letter-spacing:-1.2px">13940</text><text x="1444" y="574" class="W">分时</text></g>
<g transform="translate(1200,280) scale(.33333)">
<path fill="#ffff00" d="M25 885V848L50 845L80 852L130 855L200 868L300 870L375 873L430 870L445 855L470 852L500 868L560 855L640 855L700 845L718 820L720 778H727V885Z"/>
<g><polyline stroke="#ffff00" points="25,590 50,605 95,592 150,605 250,608 400,608 430,605 550,595 727,568"/><polyline stroke="#ffffff" points="25,590 40,625 60,570 70,585 82,563 95,575 128,658 150,605 175,605 195,635 220,645 245,590 265,578 290,578 320,610 345,628 395,640 425,605 445,550 455,555 472,507 490,520 510,562 530,540 565,515 600,520 620,550 650,530 700,515 715,482 727,488"/></g>
</g>
<rect x="1209" y="575" width="263" height="2" fill="#d00000"/>
<rect x="1209" y="577" width="241" height="21" class="hd"/><text x="1340" y="592" class="s12 m W">系统预警</text><text x="1461" y="592" class="s12 m W">设</text>
<path d="M1450.500 577V598" stroke="#500" fill="none"/>
<rect x="1209" y="598" width="263" height="1" fill="#d00000"/>
<rect x="1209" y="599" width="263" height="59" fill="#000058"/><rect x="1209" y="659" width="263" height="14" fill="#000058"/>
<rect x="1209" y="658" width="263" height="1" fill="#d00000"/><rect x="1209" y="673" width="263" height="1" fill="#d00000"/>
<g class="s12">
<g class="R"><text x="1215" y="609" style="letter-spacing:-1px">05/21</text><text x="1260" y="610">宜通世纪</text><text x="1321" y="610">阳包组合</text><text x="1412" y="609" text-anchor="end" style="letter-spacing:-.8px">17.09</text><text x="1456" y="609" text-anchor="end" style="letter-spacing:-.8px">13.03%</text></g>
<g class="R"><text x="1215" y="624" style="letter-spacing:-1px">05/21</text><text x="1260" y="625">华东医药</text><text x="1321" y="625">阳包组合</text><text x="1412" y="624" text-anchor="end" style="letter-spacing:-.8px">48.50</text><text x="1456" y="624" text-anchor="end" style="letter-spacing:-.8px">2.86%</text></g>
<g class="G"><text x="1215" y="639" style="letter-spacing:-1px">05/21</text><text x="1260" y="640">兴业矿业</text><text x="1321" y="640">阳包组合</text><text x="1412" y="639" text-anchor="end" style="letter-spacing:-.8px">8.03</text><text x="1456" y="639" text-anchor="end" style="letter-spacing:-.8px">-2.19%</text></g>
<g class="R"><text x="1215" y="654" style="letter-spacing:-1px">05/21</text><text x="1260" y="655">东风科技</text><text x="1321" y="655">阳包组合</text><text x="1412" y="654" text-anchor="end" style="letter-spacing:-.8px">13.09</text><text x="1456" y="654" text-anchor="end" style="letter-spacing:-.8px">12.26%</text></g>
<g class="R"><text x="1215" y="669" style="letter-spacing:-1px">05/22</text><text x="1260" y="670">万邦达</text><text x="1308" y="670">锅卖铁组合</text><text x="1412" y="669" text-anchor="end" style="letter-spacing:-.8px">28.20</text><text x="1456" y="669" text-anchor="end" style="letter-spacing:-.8px">0.50%</text></g>
<g class="R"><text x="1215" y="684" style="letter-spacing:-1px">08:42</text><text x="1260" y="685">长荣股份</text><text x="1308" y="685">锅卖铁组合</text><text x="1412" y="684" text-anchor="end" style="letter-spacing:-.8px">26.91</text><text x="1456" y="684" text-anchor="end" style="letter-spacing:-.8px">2.05%</text></g>
<g class="R"><text x="1215" y="699" style="letter-spacing:-1px">08:42</text><text x="1260" y="700">泰胜风能</text><text x="1308" y="700">锅卖铁组合</text><text x="1412" y="699" text-anchor="end" style="letter-spacing:-.8px">12.25</text><text x="1456" y="699" text-anchor="end" style="letter-spacing:-.8px">4.88%</text></g>
<g class="W"><text x="1215" y="714" style="letter-spacing:-1px">14:59</text><text x="1260" y="715">新疆城建</text><text x="1321" y="715">阳包组合</text><text x="1412" y="714" text-anchor="end" style="letter-spacing:-.8px">8.77</text><text x="1456" y="714" text-anchor="end">-</text></g>
</g>
<rect x="1209" y="729" width="263" height="22" class="hd"/><rect x="1209" y="729" width="263" height="1" fill="#d00000"/><rect x="1209" y="751" width="263" height="1" fill="#d00000"/>
<path d="M1430.500 729V751M1451.500 729V751" stroke="#b00000" fill="none"/>
<text x="1340" y="745" class="s12 m W" style="font-size:13px">股票池状态</text><text x="1440" y="746" class="s13 m W">全</text><text x="1461" y="746" class="s13 m W">展</text>
<rect x="1211" y="754" width="249" height="16" rx="8" fill="#008000" shape-rendering="auto"/>
<rect x="1211" y="775" width="249" height="16" rx="8" fill="#800080" shape-rendering="auto"/>
<g shape-rendering="auto"><circle cx="1219" cy="762" r="6" fill="#b8b8b8" stroke="#101070" stroke-width="1.5"/><circle cx="1219" cy="783" r="6" fill="#b8b8b8" stroke="#101070" stroke-width="1.5"/></g>
<text x="1219" y="766" class="s10 b m" fill="#d8c000">i</text><text x="1219" y="787" class="s10 b m" fill="#d8c000">i</text>
<text x="1228" y="768" class="K" style="font-size:15.500px">候鸟:去ST</text><text x="1456" y="768" class="n e K">+0.00%</text>
<text x="1228" y="789" class="K" style="font-size:15.500px">候鸟:候鸟珍藏</text><text x="1456" y="789" class="n e K">+11.75%</text>

<!-- quote column -->
<path d="M1502.500 75V285M1473 180.500H1676M1473 285.500H1676M1473 474.500H1676M1473 495.500H1676M1473 515.500H1676M1473 537.500H1676" stroke="#d00000" fill="none"/>
<g class="s16 m W"><text x="1489" y="114">卖</text><text x="1489" y="156">盘</text><text x="1489" y="219">买</text><text x="1489" y="261">盘</text></g>
<g class="n W" style="fill:#b0b0b0"><text x="1506" y="91">5</text><text x="1506" y="112">4</text><text x="1506" y="133">3</text><text x="1506" y="154">2</text><text x="1506" y="175">1</text><text x="1506" y="196">1</text><text x="1506" y="217">2</text><text x="1506" y="238">3</text><text x="1506" y="259">4</text><text x="1506" y="280">5</text></g>
<g class="n R"><text x="1544" y="91">19<tspan class="u">35</tspan></text><text x="1544" y="112">19<tspan class="u">34</tspan></text><text x="1544" y="133">19<tspan class="u">33</tspan></text><text x="1544" y="154">19<tspan class="u">32</tspan></text><text x="1544" y="175">19<tspan class="u">31</tspan></text><text x="1544" y="196">19<tspan class="u">30</tspan></text><text x="1544" y="217">19<tspan class="u">29</tspan></text><text x="1544" y="238">19<tspan class="u">28</tspan></text><text x="1544" y="259">19<tspan class="u">27</tspan></text><text x="1544" y="280">19<tspan class="u">26</tspan></text></g>
<g class="n Y e"><text x="1634" y="91">133</text><text x="1634" y="112">83</text><text x="1634" y="133">87</text><text x="1634" y="154">76</text><text x="1634" y="175">33</text><text x="1634" y="196">55</text><text x="1634" y="217">170</text><text x="1634" y="238">411</text><text x="1634" y="259">178</text><text x="1634" y="280">241</text></g>
<text x="1647" y="193" class="s10 G">-1244</text>
<g class="s16 W">
<text x="1473" y="302">最新</text><text x="1583" y="302">均价</text>
<text x="1473" y="323">涨跌</text><text x="1583" y="323">换手</text>
<text x="1473" y="344">涨幅</text><text x="1583" y="344">今开</text>
<text x="1473" y="365">总手</text><text x="1583" y="365">最高</text>
<text x="1473" y="386">现手</text><text x="1583" y="386">最低</text>
<text x="1473" y="407">总额</text><text x="1583" y="407">量比</text>
<text x="1473" y="428">涨停</text><text x="1583" y="428">跌停</text>
<text x="1473" y="449">总笔</text><text x="1583" y="449">每笔</text>
<text x="1473" y="470">内盘</text><text x="1583" y="470">外盘</text>
<text x="1473" y="491">总卖</text><text x="1583" y="491">均价</text>
<text x="1473" y="512">总买</text><text x="1583" y="512">均价</text>
</g>
<g class="n e">
<text x="1575" y="301" class="R">19<tspan class="u">30</tspan></text><path d="M1542 323L1546 313L1550 323Z" fill="#ff5454"/><text x="1575" y="322" class="R">0<tspan class="u">12</tspan></text><text x="1575" y="343" class="R">0.63%</text><text x="1575" y="364" class="Y">62374</text><text x="1575" y="385" class="G">1299</text><text x="1575" y="406" class="C">11943</text><text x="1575" y="427" class="R">21<tspan class="u">10</tspan></text><text x="1575" y="448" class="W">5385</text><text x="1575" y="469" class="G">33880</text><text x="1575" y="490" class="Y">13374</text><text x="1575" y="511" class="Y">8241</text>
<text x="1678" y="301" class="G">19<tspan class="u">15</tspan></text><text x="1678" y="322" class="Y">1.03%</text><text x="1678" y="343" class="R">19<tspan class="u">19</tspan></text><text x="1678" y="364" class="R">19<tspan class="u">47</tspan></text><text x="1678" y="385" class="G">18<tspan class="u">86</tspan></text><text x="1678" y="406" class="W">0.76</text><text x="1678" y="427" class="G">17<tspan class="u">26</tspan></text><text x="1678" y="448" class="W">11.6</text><text x="1678" y="469" class="R">28494</text><text x="1678" y="490" class="R">20<tspan class="u">03</tspan></text><text x="1678" y="511" class="G">18<tspan class="u">67</tspan></text>
</g>
<rect x="1473" y="516" width="203" height="21" class="hd"/><path d="M1636.500 516V537M1655.500 516V537" stroke="#b00000" fill="none"/>
<text x="1574" y="531" class="s12 m W">分时成交</text><path d="M1642 521L1649 527L1642 533Z" fill="#bbb"/><text x="1665" y="531" class="s12 m W">细</text>

<!-- trades -->
<path d="M1473 622H1663" stroke="#900000" stroke-dasharray="1 3" fill="none"/>
<rect x="1473" y="916" width="192" height="20" fill="#000090"/>
<g class="s12 W e" style="letter-spacing:-.3px"><text x="1510" y="572">:48</text><text x="1510" y="593">:51</text><text x="1510" y="614">:54</text><text x="1510" y="656">:06</text><text x="1510" y="677">:09</text><text x="1510" y="698">:18</text><text x="1510" y="719">:21</text><text x="1510" y="740">:24</text><text x="1510" y="761">:26</text><text x="1510" y="782">:33</text><text x="1510" y="803">:36</text><text x="1510" y="824">:38</text><text x="1510" y="845">:44</text><text x="1510" y="866">:48</text><text x="1510" y="887">:52</text><text x="1510" y="908">:57</text></g>
<g class="n W" style="font-size:14px"><text x="1475" y="552">14:55</text><text x="1475" y="636">14:56</text><text x="1475" y="930">15:00</text></g>
<g class="n R" style="font-size:14px;letter-spacing:-.8px">
<text x="1536" y="552">19<tspan class="u">28</tspan></text><text x="1536" y="573">19<tspan class="u">28</tspan></text><text x="1536" y="594">19<tspan class="u">27</tspan></text><text x="1536" y="615">19<tspan class="u">28</tspan></text><text x="1536" y="636">19<tspan class="u">28</tspan></text><text x="1536" y="657">19<tspan class="u">28</tspan></text><text x="1536" y="678">19<tspan class="u">28</tspan></text><text x="1536" y="699">19<tspan class="u">27</tspan></text><text x="1536" y="720">19<tspan class="u">28</tspan></text><text x="1536" y="741">19<tspan class="u">28</tspan></text><text x="1536" y="762">19<tspan class="u">28</tspan></text><text x="1536" y="783">19<tspan class="u">28</tspan></text><text x="1536" y="804">19<tspan class="u">28</tspan></text><text x="1536" y="825">19<tspan class="u">28</tspan></text><text x="1536" y="846">19<tspan class="u">28</tspan></text><text x="1536" y="867">19<tspan class="u">29</tspan></text><text x="1536" y="888">19<tspan class="u">30</tspan></text><text x="1536" y="909">19<tspan class="u">29</tspan></text><text x="1536" y="930">19<tspan class="u">30</tspan></text>
</g>
<use href="#ad" x="1573" y="588"/><use href="#au" x="1573" y="609"/><use href="#ad" x="1573" y="693"/><use href="#au" x="1573" y="714"/><use href="#au" x="1573" y="861"/><use href="#au" x="1573" y="882"/><use href="#ad" x="1573" y="903"/><use href="#au" x="1573" y="924"/>
<g class="n e" style="font-size:14px;letter-spacing:-.6px">
<text x="1632" y="552" class="R">9</text><text x="1632" y="573" class="R">4</text><text x="1632" y="594" class="G">200</text><text x="1632" y="615" class="G">32</text><text x="1632" y="636" class="G">1</text><text x="1632" y="657" class="G">1</text><text x="1632" y="678" class="G">4</text><text x="1632" y="699" class="G">292</text><text x="1632" y="720" class="R">6</text><text x="1632" y="741" class="G">13</text><text x="1632" y="762" class="G">42</text><text x="1632" y="783" class="R">2</text><text x="1632" y="804" class="R">21</text><text x="1632" y="825" class="R">3</text><text x="1632" y="846" class="G">62</text><text x="1632" y="867" class="R">97</text><text x="1632" y="888" class="R">10</text><text x="1632" y="909" class="G">14</text><text x="1632" y="930" class="R">1299</text>
</g>
<g class="n e W" style="font-size:14px;letter-spacing:-.6px">
<text x="1662" y="552">2</text><text x="1662" y="573">2</text><text x="1662" y="594">8</text><text x="1662" y="615">2</text><text x="1662" y="636">1</text><text x="1662" y="657">1</text><text x="1662" y="678">2</text><text x="1662" y="699">7</text><text x="1662" y="720">2</text><text x="1662" y="741">4</text><text x="1662" y="762">3</text><text x="1662" y="783">1</text><text x="1662" y="804">4</text><text x="1662" y="825">2</text><text x="1662" y="846">2</text><text x="1662" y="867">11</text><text x="1662" y="888">2</text><text x="1662" y="909">2</text><text x="1662" y="930">88</text>
</g>
<rect x="1665" y="538" width="11" height="400" fill="#333"/><rect x="1665" y="538" width="1" height="400" fill="#b00000"/>
<rect x="1667" y="538" width="8" height="10" fill="#000"/><path d="M1671 539L1667 546H1675Z" fill="#fff"/>
<rect x="1667" y="926" width="8" height="12" fill="#000"/><path d="M1667 931H1675L1671 937Z" fill="#fff"/><rect x="1667" y="926" width="8" height="2" fill="#999"/>

<!-- bottom right tabs -->
<rect x="1473" y="939" width="203" height="1" fill="#d00000"/>
<rect x="1473" y="940" width="50" height="18" class="hd"/><path d="M1523.500 940V958M1573.500 940V958M1624.500 940V958" stroke="#d00000" fill="none"/>
<g class="s13 m W"><text x="1497" y="954" style="fill:#30e8e8">分笔</text><text x="1547" y="954">财务</text><text x="1598" y="954">成本</text><text x="1650" y="954">委托</text></g>
</svg>
</body></html>
